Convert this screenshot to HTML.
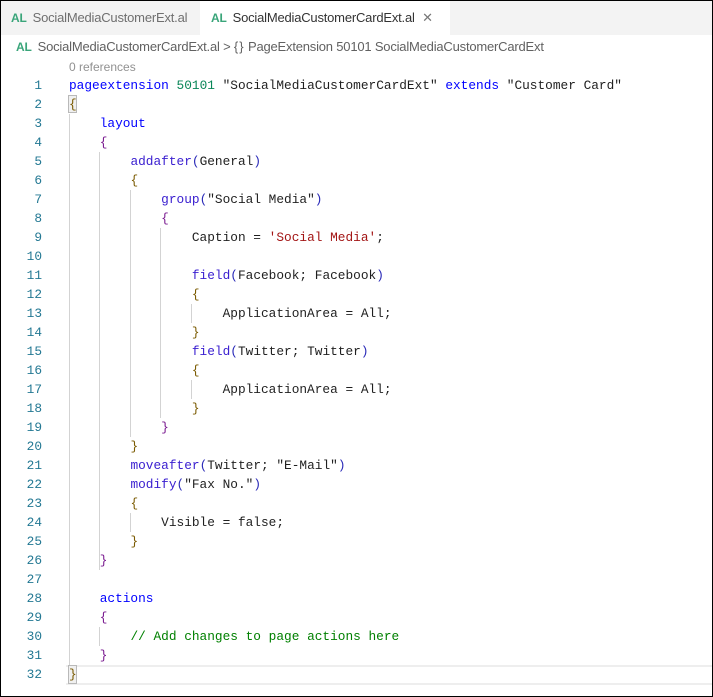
<!DOCTYPE html>
<html><head><style>
*{margin:0;padding:0;box-sizing:border-box}
body{width:713px;height:697px;overflow:hidden;background:#fff;position:relative;font-family:"Liberation Sans",sans-serif}
.frame{position:absolute;left:0;top:0;width:713px;height:697px;border:1px solid #000;}
.tabs{position:absolute;left:1px;top:1px;width:711px;height:34px;background:#f3f3f3}
.tab{position:absolute;top:0;height:34px;font-size:13px;color:#6f6f6f;line-height:34px;white-space:nowrap;letter-spacing:-0.2px}
.al{color:#3aa57a;font-weight:bold;font-size:12px;margin-right:6px}
.crumb{position:absolute;left:16px;top:37px;font-size:13px;color:#616161;line-height:20px;white-space:nowrap;letter-spacing:-0.2px}
.ln{position:absolute;left:0;width:42px;text-align:right;font-family:"Liberation Mono",monospace;font-size:12.8px;color:#237893;line-height:19px}
.code{position:absolute;left:69px;font-family:"Liberation Mono",monospace;font-size:12.8px;color:#1f1f1f;line-height:19px;white-space:pre}
.k{color:#0000ff}.f{color:#3b20d0}.s{color:#a31515}.n{color:#098658}.c{color:#008000}
.g{color:#7a5a00}.p{color:#7a1a90}.b{color:#2a2ab8}
.guide{position:absolute;width:1px;background:#d3d3d3}
</style></head><body>
<div class="tabs">
 <div class="tab" style="left:0;width:199px;padding-left:10px"><span class="al">AL</span>SocialMediaCustomerExt.al</div>
 <div class="tab" style="left:199px;width:250px;background:#fff;color:#333;padding-left:11px"><span class="al">AL</span>SocialMediaCustomerCardExt.al <span style="color:#777;margin-left:4px">✕</span></div>
</div>
<div class="crumb"><span class="al">AL</span>SocialMediaCustomerCardExt.al &gt; <span style="letter-spacing:1px">{}</span> PageExtension 50101 SocialMediaCustomerCardExt</div>
<div style="position:absolute;left:69px;top:60px;font-size:12px;color:#919191">0 references</div>
<div style="position:absolute;left:66px;top:665px;width:646px;height:20px;border-top:2px solid #eee;border-bottom:2px solid #eee"></div>
<div style="position:absolute;left:68px;top:95px;width:9px;height:18px;border:1px solid #b9b9b9;background:#f0f0f0"></div>
<div style="position:absolute;left:68px;top:665px;width:9px;height:19px;border:1px solid #b9b9b9;background:#f0f0f0"></div>
<div class="guide" style="left:69px;top:114px;height:551px"></div>
<div class="guide" style="left:99px;top:152px;height:418px"></div>
<div class="guide" style="left:99px;top:627px;height:19px"></div>
<div class="guide" style="left:130px;top:190px;height:247px"></div>
<div class="guide" style="left:130px;top:513px;height:19px"></div>
<div class="guide" style="left:160px;top:228px;height:190px"></div>
<div class="guide" style="left:191px;top:304px;height:19px"></div>
<div class="guide" style="left:191px;top:380px;height:19px"></div>
<div class="ln" style="top:76px">1<br>2<br>3<br>4<br>5<br>6<br>7<br>8<br>9<br>10<br>11<br>12<br>13<br>14<br>15<br>16<br>17<br>18<br>19<br>20<br>21<br>22<br>23<br>24<br>25<br>26<br>27<br>28<br>29<br>30<br>31<br>32</div>
<div class="code" style="top:76px"><span class="k">pageextension</span> <span class="n">50101</span> "SocialMediaCustomerCardExt" <span class="k">extends</span> "Customer Card"
<span class="g">{</span>
    <span class="k">layout</span>
    <span class="p">{</span>
        <span class="f">addafter</span><span class="b">(</span>General<span class="b">)</span>
        <span class="g">{</span>
            <span class="f">group</span><span class="b">(</span>"Social Media"<span class="b">)</span>
            <span class="p">{</span>
                Caption = <span class="s">'Social Media'</span>;

                <span class="f">field</span><span class="b">(</span>Facebook; Facebook<span class="b">)</span>
                <span class="g">{</span>
                    ApplicationArea = All;
                <span class="g">}</span>
                <span class="f">field</span><span class="b">(</span>Twitter; Twitter<span class="b">)</span>
                <span class="g">{</span>
                    ApplicationArea = All;
                <span class="g">}</span>
            <span class="p">}</span>
        <span class="g">}</span>
        <span class="f">moveafter</span><span class="b">(</span>Twitter; "E-Mail"<span class="b">)</span>
        <span class="f">modify</span><span class="b">(</span>"Fax No."<span class="b">)</span>
        <span class="g">{</span>
            Visible = false;
        <span class="g">}</span>
    <span class="p">}</span>

    <span class="k">actions</span>
    <span class="p">{</span>
        <span class="c">// Add changes to page actions here</span>
    <span class="p">}</span>
<span class="g">}</span></div>
<div class="frame"></div>
</body></html>
